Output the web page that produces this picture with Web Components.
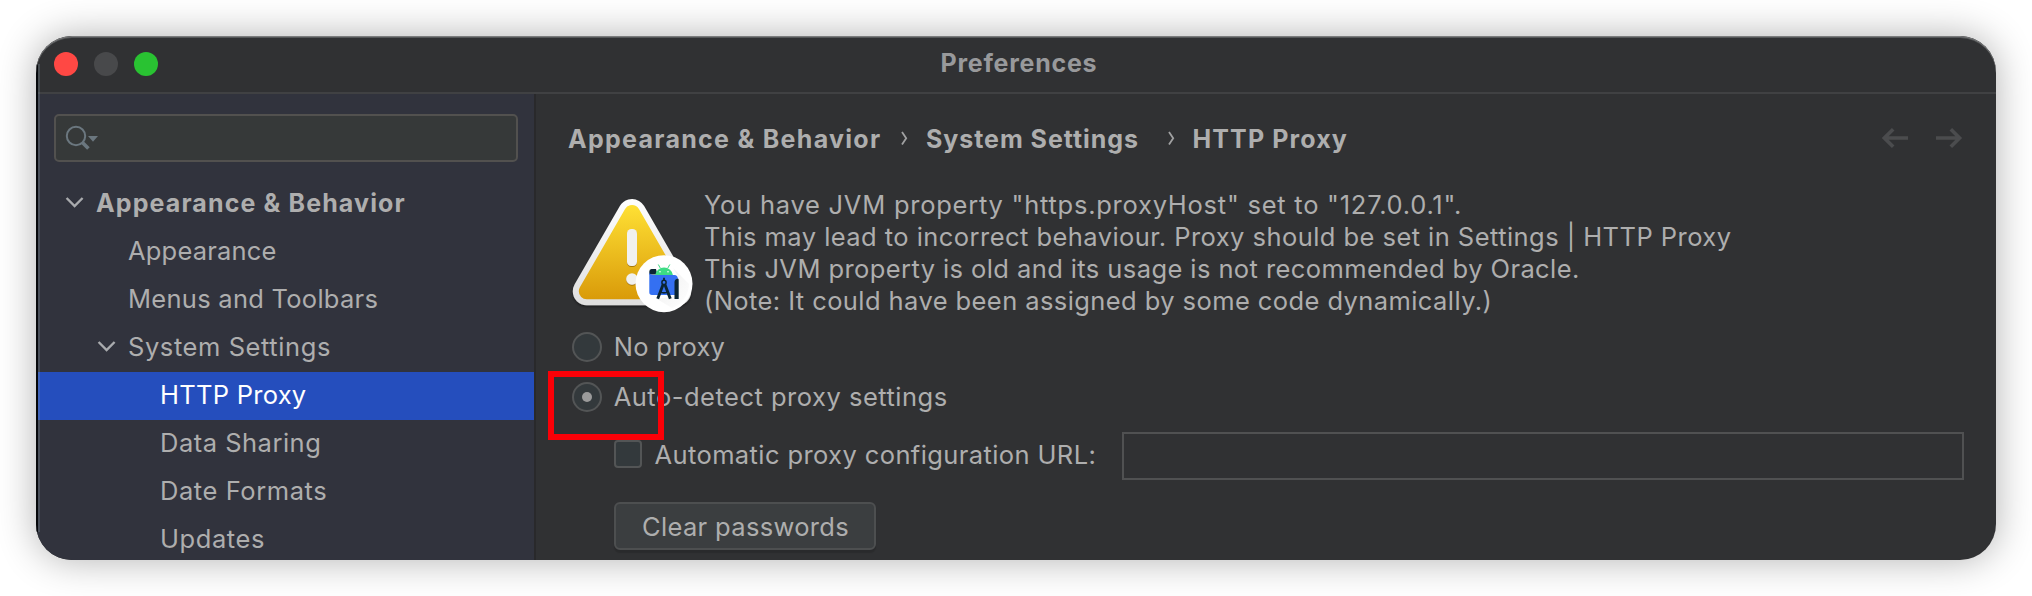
<!DOCTYPE html>
<html lang="en">
<head>
<meta charset="utf-8">
<title>Preferences</title>
<style>
  html, body { margin: 0; padding: 0; background: #fff; }
  body { box-sizing: border-box; width: 2032px; height: 596px; padding: 36px; overflow: hidden;
    font-family: Inter, "Liberation Sans", sans-serif; font-size: 25.5px; color: #aeaeae; }
</style>
</head>
<body>
<pref-window heading="Preferences">
  <pref-sidebar slot="sidebar">
    <tree-item level="0" open bold style="letter-spacing:1.116px">Appearance &amp; Behavior</tree-item>
    <tree-item level="1" style="letter-spacing:.2px">Appearance</tree-item>
    <tree-item level="1" style="letter-spacing:.27px">Menus and Toolbars</tree-item>
    <tree-item level="1" open style="letter-spacing:.58px">System Settings</tree-item>
    <tree-item level="2" selected style="letter-spacing:.27px">HTTP Proxy</tree-item>
    <tree-item level="2" style="letter-spacing:.5px">Data Sharing</tree-item>
    <tree-item level="2" style="letter-spacing:.57px">Date Formats</tree-item>
    <tree-item level="2" style="letter-spacing:.58px">Updates</tree-item>
  </pref-sidebar>
  <pref-breadcrumbs>
    <crumb-item style="width:333px;letter-spacing:1.291px">Appearance &amp; Behavior</crumb-item>
    <crumb-item chevron style="width:266.5px;letter-spacing:.944px">System Settings</crumb-item>
    <crumb-item chevron style="letter-spacing:1.114px">HTTP Proxy</crumb-item>
  </pref-breadcrumbs>
  <warning-message>
    <message-line style="letter-spacing:.75px">You have JVM property "https.proxyHost" set to "127.0.0.1".</message-line>
    <message-line style="letter-spacing:.447px">This may lead to incorrect behaviour. Proxy should be set in Settings | HTTP Proxy</message-line>
    <message-line style="letter-spacing:.412px">This JVM property is old and its usage is not recommended by Oracle.</message-line>
    <message-line style="letter-spacing:.416px">(Note: It could have been assigned by some code dynamically.)</message-line>
  </warning-message>
  <radio-option style="margin-top:15px;letter-spacing:.257px">No proxy</radio-option>
  <radio-option checked marked style="margin-top:20px;letter-spacing:.5px">Auto-detect proxy settings</radio-option>
  <url-row style="letter-spacing:.396px">Automatic proxy configuration URL:</url-row>
  <push-button style="letter-spacing:.336px">Clear passwords</push-button>
</pref-window>

<script>
const define = (name, html) => {
  const tpl = document.createElement('template');
  tpl.innerHTML = html;
  customElements.define(name, class extends HTMLElement {
    constructor() {
      super();
      this.attachShadow({ mode: 'open' }).append(tpl.content.cloneNode(true));
    }
    connectedCallback() {
      const h = this.shadowRoot.querySelector('[data-heading]');
      if (h) h.textContent = this.getAttribute('heading');
    }
  });
};

define('pref-window', `
<style>
  :host { display: flex; flex-direction: column; position: relative; box-sizing: border-box; width: 1960px; height: 524px;
    border-radius: 36px; background: #303133; box-shadow: 0 0 38px rgba(0,0,0,.31); }
  .frame { display: flex; flex-direction: column; height: 524px; border-radius: 36px; overflow: hidden; position: relative; }
  .edge { position: absolute; inset: 0; pointer-events: none; border-radius: 36px; box-shadow: inset 0 1px 0 #7b7c7d, inset 0 2px 0 #56585a; }
  .left { position: absolute; left: 0; top: 28px; bottom: 28px; width: 2px; background: #06080b; background-clip: padding-box; border-right: 2px solid rgba(150,170,185,.24); }
  header { display: flex; align-items: flex-start; box-sizing: border-box; height: 58px; border-bottom: 2px solid #404143; padding-left: 18px; }
  .lights { display: flex; gap: 16px; margin-top: 16px; width: 886.5px; }
  i { width: 24px; height: 24px; border-radius: 50%; background: #48494b; }
  i.r { background: #ff4844; } i.g { background: #29c232; }
  h1 { margin: 4px 0 0; font-size: 25px; font-weight: 700; line-height: 46px; letter-spacing: .75px; color: #98999b; white-space: nowrap; }
  .body { display: flex; flex: 1; min-height: 0; }
  main { display: flex; flex-direction: column; flex: 1; padding: 20px 32px 0; border-left: 2px solid #29292b; min-width: 0; }
</style>
<div class="frame">
  <header><div class="lights"><i class="r"></i><i></i><i class="g"></i></div><h1 data-heading></h1></header>
  <div class="body"><slot name="sidebar"></slot><main><slot></slot></main></div>
  <div class="left"></div><div class="edge"></div>
</div>`);

define('pref-sidebar', `
<style>
  :host { display: flex; flex-direction: column; width: 498px; background: #31333d; flex: none; }
  .search { box-sizing: border-box; width: 464px; height: 48px; margin: 20px 0 18px 18px; border: 2px solid #52514f; border-radius: 5px; background: #363939; }
  svg { display: block; }
</style>
<div class="search"><svg width="60" height="44" viewBox="56 116 60 44">
  <circle cx="76" cy="136" r="9.2" fill="none" stroke="#6b777f" stroke-width="2"/>
  <path d="M82.4 142.4l6 6" stroke="#6b777f" stroke-width="3.6"/>
  <path d="M88 136h10l-5 5.7z" fill="#6b777f"/></svg></div>
<slot></slot>`);

define('tree-item', `
<style>
  :host { display: flex; height: 48px; flex: none; line-height: 45px; white-space: nowrap; padding-left: 24px; }
  :host([level="1"]) { padding-left: 56px; }
  :host([level="2"]) { padding-left: 88px; }
  :host([bold]) { font-weight: 700; font-size: 25px; line-height: 46px; }
  :host([selected]) { background: #254ebd; color: #fff; }
  .arrow { width: 36px; flex: none; }
  svg { display: none; margin: 13px 0 0 5px; }
  :host([open]) svg { display: block; }
</style>
<span class="arrow"><svg width="20" height="18" viewBox="0 0 20 18"><path d="M1.6 5l8 8 8-8" fill="none" stroke="#a9abae" stroke-width="2.4"/></svg></span><slot></slot>`);

define('pref-breadcrumbs', `
<style>
  :host { display: flex; height: 48px; font-weight: 700; font-size: 25px; line-height: 46px; white-space: nowrap; }
  .nav { display: flex; gap: 26px; margin: 12px 0 0 auto; }
  svg { display: block; fill: none; }
  ::slotted(*) { margin-top: 2px; }
</style>
<slot></slot>
<div class="nav">
  <svg width="28" height="24" viewBox="0 0 28 24" stroke="#4b4c4e" stroke-width="3.6"><path d="M26 12H3M11.2 3.2L2.4 12l8.800 8.800"/></svg>
  <svg width="28" height="24" viewBox="0 0 28 24" stroke="#4b4c4e" stroke-width="3.6"><path d="M0 12h23M14.800 3.200l8.800 8.800-8.800 8.800"/></svg>
</div>`);

define('crumb-item', `
<style>
  :host { display: flex; flex: none; }
  svg { display: none; flex: none; margin-top: 14px; }
  :host([chevron]) svg { display: block; }
  :host([chevron]) span { margin-left: 18px; }
</style>
<svg width="7" height="16" viewBox="0 0 7 16"><path d="M1 2l4.2 6.2L1 14.4" fill="none" stroke="#a0a1a2" stroke-width="1.8"/></svg><span><slot></slot></span>`);

define('message-line', `<style>:host { display: block; line-height: 32px; height: 32px; white-space: nowrap; }</style><slot></slot>`);

define('warning-message', `
<style>
  :host { display: flex; margin-top: 27px; height: 128px; }
  svg { display: block; flex: none; margin-top: 7px; }
  .text { margin-left: 6px; }
</style>
<svg width="130" height="120" viewBox="-2 0 130 120">
  <defs>
    <linearGradient id="y" gradientUnits="userSpaceOnUse" x1="0" y1="8" x2="0" y2="104"><stop offset="0" stop-color="#ffe135"/><stop offset="1" stop-color="#d99a09"/></linearGradient>
    <linearGradient id="w" gradientUnits="userSpaceOnUse" x1="0" y1="2" x2="0" y2="110"><stop offset="0" stop-color="#fff"/><stop offset="1" stop-color="#dedede"/></linearGradient>
    <linearGradient id="s" x1="0" y1="0" x2="1" y2="1"><stop offset="0" stop-color="#ddd"/><stop offset="1" stop-color="#fff"/></linearGradient>
    <filter id="d" filterUnits="userSpaceOnUse" x="-2" y="-4" width="130" height="126"><feDropShadow dx="0" dy="1.5" stdDeviation="1.3" flood-opacity=".5"/></filter>
    <filter id="e" filterUnits="userSpaceOnUse" x="50" y="28" width="24" height="68"><feDropShadow dx="0" dy="1" stdDeviation=".7" flood-color="#8a6000" flood-opacity=".7"/></filter>
  </defs>
  <path d="M62 17l45.200 78.300H16.800z" fill="url(#w)" stroke="url(#w)" stroke-width="28" stroke-linejoin="round" filter="url(#d)"/>
  <path d="M62 17l45.200 78.300H16.800z" fill="url(#y)" stroke="url(#y)" stroke-width="16" stroke-linejoin="round"/>
  <g fill="#f1f1ef" filter="url(#e)"><rect x="57" y="33" width="10" height="37" rx="4.500"/><circle cx="62" cy="83" r="5.800"/></g>
  <circle cx="94" cy="87.700" r="28.500" fill="#fff"/>
  <path d="M103 72l16 16a26 26 0 0 1-17 24l-15-9 13-2 8-3V80z" fill="url(#s)" opacity=".5"/>
  <path d="M86 73h-4.500a2.500 2.500 0 0 0-2.200 2.500v3h8z" fill="#0b2533"/>
  <path d="M79.300 77q1.500 2 4 2h21q3.500 0 3.500 3.500V99H82q-2.700 0-2.700-2.700z" fill="#3470f2"/>
  <path d="M104.500 86q0-3 3.500-3.500l.7 1V103h-4.200z" fill="#0b2533"/>
  <path d="M85.200 79a8.900 8.300 0 0 1 17.700 0z" fill="#3ddc84"/>
  <path d="M88.300 68.500l2 3.600M99.800 68.500l-2 3.600" stroke="#3ddc84" stroke-width="1"/>
  <circle cx="90" cy="75.700" r=".8" fill="#fff"/><circle cx="98" cy="75.700" r=".8" fill="#fff"/>
  <g fill="none" stroke="#0b2533"><circle cx="94" cy="86.400" r="2.100" stroke-width="1.500"/><path d="M94 81.800v3" stroke-width="1.800"/><path d="M93 88.800l-5.300 14M95 88.800l5.300 14" stroke-width="2.900"/><path d="M89.500 95.600q4.500 2.600 9 0" stroke-width="1.600"/></g>
</svg>
<div class="text"><slot></slot></div>`);

define('radio-option', `
<style>
  :host { display: flex; height: 30px; padding-left: 4px; line-height: 29px; position: relative; white-space: nowrap; }
  .dot { display: flex; align-items: center; justify-content: center; box-sizing: border-box; width: 30px; height: 30px; border: 2px solid #535556; border-radius: 50%; background: #33393c; margin-right: 11.7px; }
  .dot b { display: none; width: 10px; height: 10px; border-radius: 50%; background: #9b9b9b; }
  :host([checked]) .dot b { display: block; }
  .mark { display: none; position: absolute; left: -20px; top: -11px; box-sizing: border-box; width: 116px; height: 69px; border: 6px solid #fb0007; z-index: 1; }
  :host([marked]) .mark { display: block; }
</style>
<span class="dot"><b></b></span><span><slot></slot></span><span class="mark"></span>`);

define('url-row', `
<style>
  :host { display: flex; height: 48px; margin-top: 20px; padding-left: 46px; line-height: 45px; white-space: nowrap; }
  .box { box-sizing: border-box; width: 28px; height: 28px; margin-top: 8px; border: 2px solid #535556; border-radius: 4px; background: #33393c; }
  .label { margin-left: 12.5px; width: 467.5px; }
  .field { flex: 1; box-sizing: border-box; border: 2px solid #505152; }
</style>
<span class="box"></span><span class="label"><slot></slot></span><span class="field"></span>`);

define('push-button', `
<style>
  :host { display: block; box-sizing: border-box; width: 262px; height: 48px; flex: none; margin: 22px 0 0 46px; padding-left: 26px; line-height: 45px;
    border: 2px solid #4d4f50; border-radius: 6px; background: #3b3e40; box-shadow: 0 3px 1px rgba(0,0,0,.13); white-space: nowrap; }
</style><slot></slot>`);
</script>
</body>
</html>
